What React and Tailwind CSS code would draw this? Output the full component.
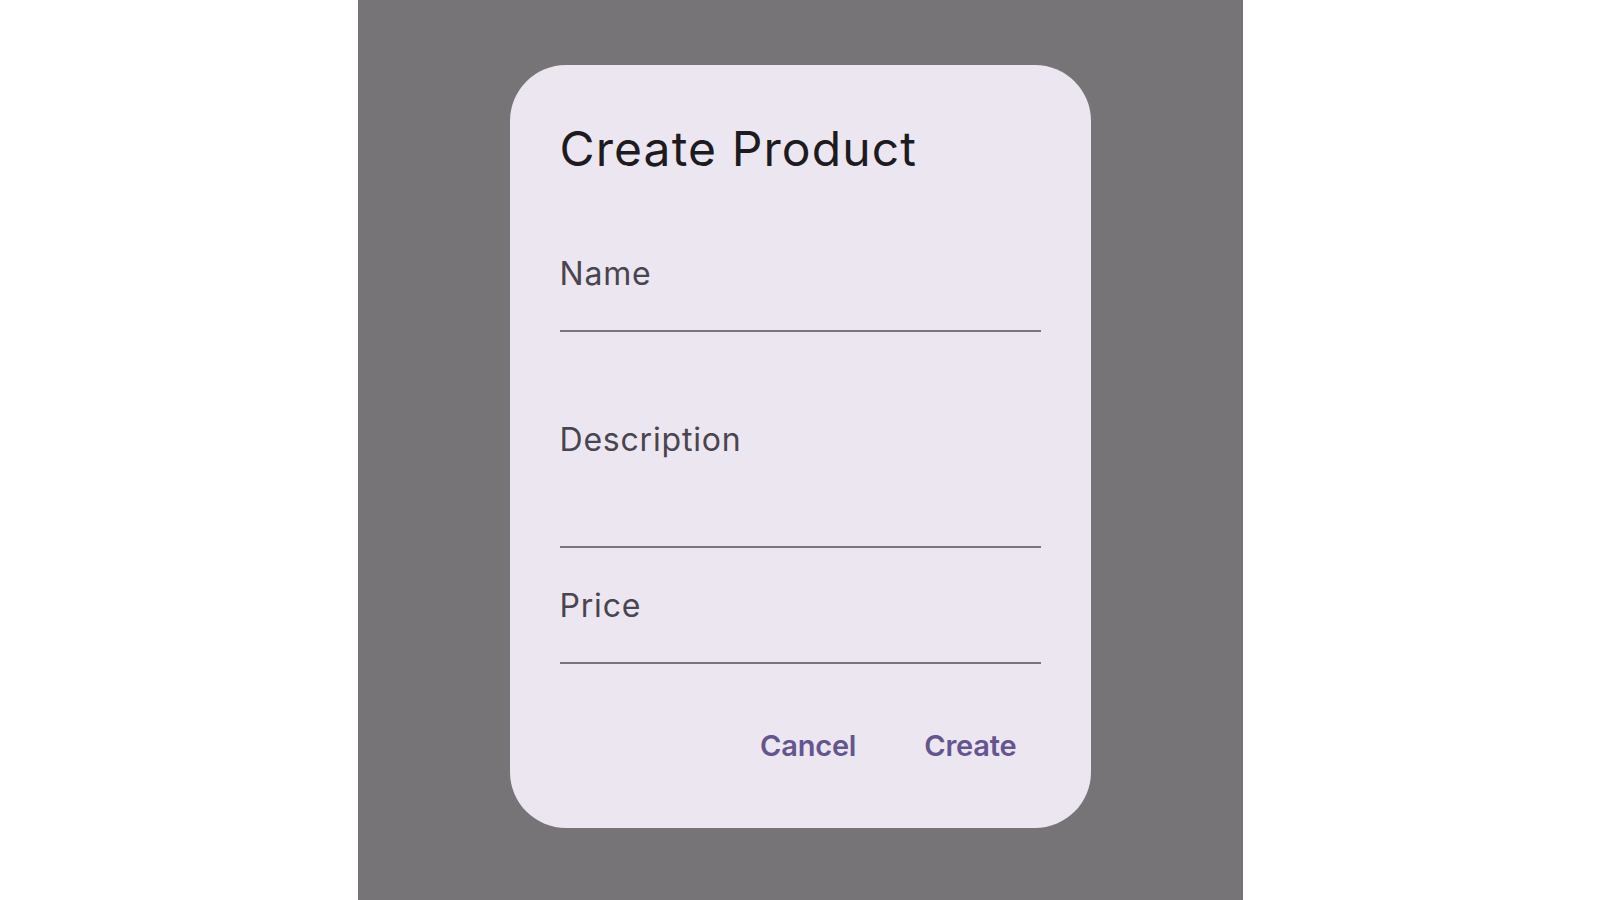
import React from 'react';

function Field({ label, gapTop, gapLine }) {
  return (
    <div className={gapTop}>
      <div className="text-[32px] leading-[40px] tracking-[0.8px] text-[#49454F]">{label}</div>
      <div className={`${gapLine} h-[2px] bg-[#79747E]`} />
    </div>
  );
}

export default function App() {
  return (
    <div className="w-full h-[900px] bg-white" style={{ fontFamily: 'Inter, "Noto Sans", sans-serif' }}>
      <div className="mx-auto w-[885px] h-[900px] bg-[#767477] pt-[65px]">
        <div className="mx-auto w-[581px] h-[763px] rounded-[56px] bg-[#ECE6F0] pt-[56px] px-[50px]">
          <h2 className="text-[48px] leading-[56px] text-[#1D1B20] tracking-[1.1px]">Create Product</h2>

          <Field label="Name" gapTop="mt-[77px]" gapLine="mt-[36px]" />
          <Field label="Description" gapTop="mt-[88px]" gapLine="mt-[86px]" />
          <Field label="Price" gapTop="mt-[38px]" gapLine="mt-[36px]" />

          <div className="mt-[62px] flex justify-end gap-[20px]">
            <button className="px-[24px] text-[29px] leading-[40px] font-semibold tracking-[-0.2px] text-[#65558F]">Cancel</button>
            <button className="px-[24px] text-[29px] leading-[40px] font-semibold tracking-[-0.2px] text-[#65558F]">Create</button>
          </div>
        </div>
      </div>
    </div>
  );
}
